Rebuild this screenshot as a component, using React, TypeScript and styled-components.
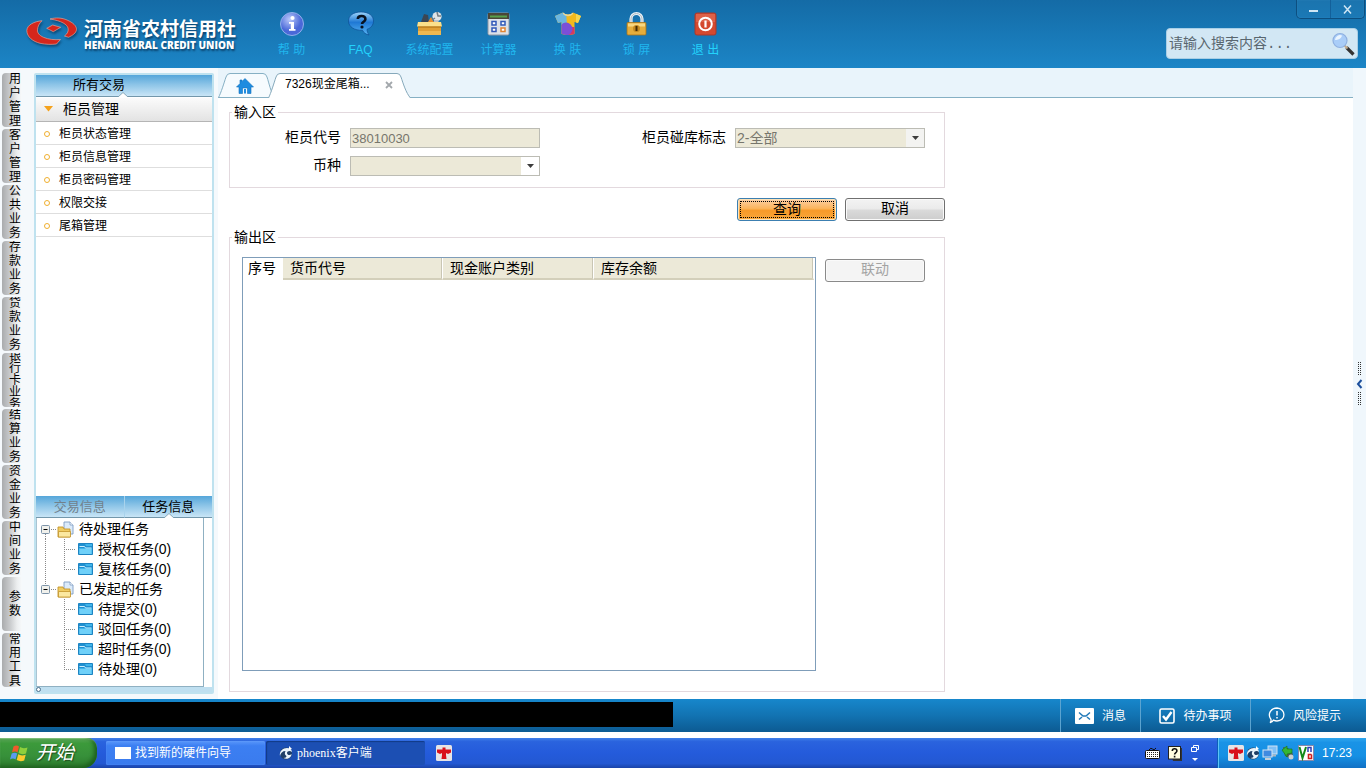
import React from "react";
import styled, { createGlobalStyle, css } from "styled-components";

const sans = `"Liberation Sans", "Noto Sans CJK SC", sans-serif`;
const serif = `"Liberation Serif", "Noto Sans CJK SC", serif`;
const mono = `"Liberation Mono", "Noto Sans CJK SC", monospace`;

const GlobalStyle = createGlobalStyle`
  *, *::before, *::after { box-sizing: border-box; }
  body { margin: 0; background: #fff; font: 14px/18px ${sans}; color: #000; }
  button, input, select { font: inherit; color: inherit; margin: 0; padding: 0; border-radius: 0; }
  button { border: 0; background: none; cursor: pointer; white-space: nowrap; }
  ul { list-style: none; margin: 0; padding: 0; }
  svg { display: block; flex: none; }
`;

const Screen = styled.div`
  display: flex;
  flex-direction: column;
  min-height: 100vh;
`;

/* ---------- header ---------- */

const Header = styled.header`
  display: flex;
  height: 68px;
  background: linear-gradient(#146ba6, #1c85c6);
`;

const Brand = styled.div`
  display: flex;
  width: 257px;
  padding: 16px 0 0 26px;
  gap: 7px;
  flex: none;
`;

const BrandText = styled.div`
  padding-top: 4px;
  color: #fff;
  white-space: nowrap;
  text-shadow: 1px 2px 2px rgba(0, 30, 60, 0.6);
`;

const BrandName = styled.div`
  font-size: 19px;
  line-height: 20px;
  font-weight: 700;
`;

const BrandLatin = styled.div`
  font: 800 10px/10px "Open Sans", ${sans};
`;

const ToolNav = styled.nav`
  display: flex;
  flex: 1;
`;

const Tool = styled.button<{ $bright?: boolean }>`
  display: flex;
  flex-direction: column;
  align-items: center;
  width: 69px;
  height: 68px;
  padding-top: 11px;
  gap: 4px;
  font-size: 12px;
  line-height: 18px;
  white-space: pre;
  color: ${(p) => (p.$bright ? "#23d3fc" : "#20b6ee")};
`;

const HeaderEnd = styled.div`
  display: flex;
  flex-direction: column;
  align-items: flex-end;
  gap: 9px;
`;

const WindowButtons = styled.div`
  display: flex;
  width: 69px;
  height: 19px;
  margin-right: 1px;
  border: 1px solid #0d4f80;
  border-top: 0;
  border-radius: 0 0 5px 5px;
  background: linear-gradient(#1b74ae, #1b79b6);
  box-shadow: inset 0 0 1px #4d9dcb;
`;

const WindowButton = styled.button`
  display: grid;
  place-items: center;
  flex: 1;
  & + & {
    border-left: 1px solid #13609a;
  }
`;

const Search = styled.form`
  display: flex;
  align-items: center;
  width: 192px;
  height: 31px;
  margin-right: 8px;
  padding: 0 2px;
  border: 1px solid #a9cfe6;
  border-radius: 4px;
  background: #d2e7f4;
`;

const SearchInput = styled.input`
  flex: 1;
  min-width: 0;
  border: 0;
  outline: 0;
  background: none;
  font: 14px/20px ${mono};
  &::placeholder {
    color: #59666f;
    opacity: 1;
  }
`;

/* ---------- left side ---------- */

const Main = styled.main`
  display: flex;
  flex: 1;
  background: #f5f9fc;
`;

const Rail = styled.nav`
  display: flex;
  flex-direction: column;
  gap: 2px;
  width: 34px;
  padding: 5px 0 0 2px;
  flex: none;
`;

const RailTab = styled.button<{ $tight?: boolean }>`
  display: flex;
  flex-direction: column;
  align-items: center;
  justify-content: center;
  width: 20px;
  height: 54px;
  padding-left: 6px;
  overflow: hidden;
  border-radius: 4px 0 0 4px;
  background: linear-gradient(90deg, #a9abad, #c9cbcd 40%, #eceeef 75%, #f7fafc);
  font-size: 12px;
  line-height: ${(p) => (p.$tight ? 12 : 14)}px;
`;

const RailGlyph = styled.span`
  flex: none;
`;

const Sidebar = styled.aside`
  display: flex;
  flex-direction: column;
  width: 180px;
  margin: 5px 0;
  flex: none;
  border: 2px solid #bfe2ef;
  border-radius: 2px;
  background: #fff;
`;

const blueBar = css`
  background: linear-gradient(#55a6da, #8cc4e7 45%, #c9e5f6);
`;

const SideTitle = styled.button`
  ${blueBar}
  position: relative;
  height: 22px;
  padding: 0 50px 2px 0;
  border-bottom: 1px solid #7397ab;
  font-size: 13px;
  line-height: 19px;
`;

const Notch = styled.svg`
  position: absolute;
  right: 84px;
  bottom: -1px;
`;

const GroupButton = styled.button`
  display: flex;
  align-items: center;
  gap: 10px;
  height: 24px;
  margin-top: 1px;
  padding: 0 0 2px 8px;
  border-bottom: 1px solid #b5b5b5;
  background: linear-gradient(#fbfbfb, #e3e3e3);
`;

const MenuItem = styled.button`
  display: flex;
  align-items: center;
  gap: 9px;
  width: 100%;
  height: 23px;
  padding: 2px 0 0 8px;
  border-bottom: 1px solid #dedede;
  font-size: 12px;
`;

const Bullet = styled.span`
  width: 6px;
  height: 6px;
  border: 1px solid #f0b030;
  border-radius: 50%;
`;

const InfoTabs = styled.div`
  display: flex;
  height: 22px;
  margin-top: auto;
`;

const InfoTab = styled.button<{ $active?: boolean }>`
  ${blueBar}
  position: relative;
  flex: 1;
  font-size: 13px;
  line-height: 22px;
  border-bottom: 1px solid #7397ab;
  color: ${(p) => (p.$active ? "#000" : "#71818c")};
  & + & {
    border-left: 1px solid #a9d3ec;
  }
  ${Notch} {
    right: 38px;
  }
`;

const Tree = styled.ul`
  width: 168px;
  height: 169px;
  padding: 1px 0 0 4px;
  border: 1px solid #8fb0c2;
  border-top: 0;
  border-left-color: #a9c4d2;
`;

const TreeRow = styled.li`
  display: flex;
  align-items: center;
  height: 20px;
  white-space: nowrap;
`;

const TreeLabel = styled.span<{ $gap: number }>`
  margin-left: ${(p) => p.$gap}px;
`;

const SideFoot = styled.div`
  display: flex;
  align-items: center;
  height: 5px;
  background: #bfdff0;
`;

const Grip = styled.span`
  width: 5px;
  height: 5px;
  border: 1px solid #4a6f8c;
  border-radius: 50%;
  background: #fff;
`;

/* ---------- workspace ---------- */

const Workspace = styled.section`
  display: flex;
  flex-direction: column;
  flex: 1;
  min-width: 0;
  margin-left: 4px;
`;

const TabStrip = styled.div`
  display: flex;
  height: 30px;
  padding-top: 5px;
  background: #e9f4fb;
  box-shadow: inset 0 -1px #86b0c4;
`;

const Tab = styled.div<{ $width: number }>`
  position: relative;
  display: flex;
  align-items: center;
  width: ${(p) => p.$width}px;
  height: 25px;
  & + & {
    margin-left: -7px;
  }
`;

const TabShape = styled.svg`
  position: absolute;
  left: 0;
  top: 0;
`;

const HomeButton = styled.button`
  position: relative;
  margin: 1px 0 0 18px;
`;

const TabTitle = styled.button`
  position: relative;
  margin: 0 0 4px 17px;
  font-size: 12px;
  line-height: 20px;
`;

const TabClose = styled.button`
  position: relative;
  margin: 0 18px 2px auto;
`;

const Page = styled.div`
  display: flex;
  flex-direction: column;
  flex: 1;
  padding: 5px 0 7px 11px;
  background: #fff;
  > * {
    width: 716px;
    max-width: 100%;
  }
`;

const Group = styled.fieldset`
  min-width: 0;
  margin: 0;
  padding: 0;
  border: 1px solid #e3d9de;
`;

const Legend = styled.legend`
  margin-left: 2px;
  padding: 0 2px;
  line-height: 18px;
`;

const Fields = styled.div`
  display: grid;
  grid-template-columns: 112px 190px 179px 190px;
  gap: 8px;
  padding: 7px 0 11px;
`;

const FieldLabel = styled.label`
  padding-right: 1px;
  line-height: 18px;
  text-align: right;
`;

const fieldBox = css`
  width: 100%;
  height: 20px;
  padding: 0 1px;
  border: 1px solid #bcbcb4;
  background: #ece9d8;
  font-size: 14px;
  line-height: 18px;
  color: #77766c;
  opacity: 1;
`;

const TextField = styled.input`
  ${fieldBox}
  font-size: 13px;
`;

const SelectWrap = styled.div`
  position: relative;
`;

const SelectField = styled.select`
  ${fieldBox}
  display: block;
  appearance: none;
`;

const SelectArrow = styled.span<{ $dim?: boolean }>`
  position: absolute;
  top: 1px;
  right: 1px;
  display: grid;
  place-items: center;
  width: 18px;
  height: 18px;
  background: ${(p) => (p.$dim ? "#f3f3f1" : "#fff")};
  pointer-events: none;
`;

const Actions = styled.div`
  display: flex;
  justify-content: flex-end;
  gap: 8px;
  margin: 10px 0 7px;
`;

const Button = styled.button<{ $primary?: boolean }>`
  width: 100px;
  height: 23px;
  padding: 0 2px 3px;
  flex: none;
  line-height: 18px;
  border: 1px solid #707070;
  border-radius: 3px;
  background: linear-gradient(#f3f3f3, #ebebeb 45%, #d9d9d9 55%, #cdcdcd);
  box-shadow: inset 0 0 0 1px #fafafa;
  ${(p) =>
    p.$primary &&
    css`
      padding: 2px;
      border-color: #3c7fb1;
      background: linear-gradient(#fbd0a8, #fbb45c 45%, #f79a28 55%, #f9a83c);
      box-shadow: inset 0 0 0 1px #fde3b8;
      > span {
        display: block;
        height: 17px;
        border: 1px dotted #000;
        line-height: 14px;
      }
    `}
  &:disabled {
    border-color: #8a8a8a;
    background: #f4f4f4;
    color: #a3a3a3;
  }
`;

const OutputGroup = styled(Group)`
  display: flex;
  flex: 1;
`;

const OutputBody = styled.div`
  display: flex;
  align-items: flex-start;
  gap: 9px;
  flex: 1;
  padding: 11px 19px 20px 12px;
`;

const TableFrame = styled.div`
  align-self: stretch;
  flex: 1;
  border: 1px solid #7f9db9;
  background: #fff;
`;

const Table = styled.table`
  width: 571px;
  max-width: 100%;
  table-layout: fixed;
  border-collapse: separate;
  border-spacing: 0;
`;

const Th = styled.th<{ $width: number }>`
  width: ${(p) => p.$width}px;
  height: 22px;
  padding: 0 0 0 7px;
  border-right: 1px solid #fff;
  border-bottom: 2px solid #d3cfba;
  background: #ece9d8;
  box-shadow: inset -1px 0 #c9c6b4;
  font-weight: 400;
  text-align: left;
  white-space: nowrap;
  &:first-child {
    padding-left: 5px;
    border-color: #fff;
    background: #fff;
    box-shadow: none;
  }
`;

const LinkButton = styled(Button)`
  margin-top: 2px;
`;

const Splitter = styled.button`
  display: flex;
  flex-direction: column;
  align-items: center;
  justify-content: center;
  width: 13px;
  flex: none;
  background: #f0f7fc;
`;

/* ---------- status bar ---------- */

const StatusBar = styled.footer`
  display: flex;
  align-items: center;
  height: 33px;
  margin-bottom: 6px;
  padding-right: 8px;
  background: linear-gradient(#1787cc, #1273b2 50%, #0c5a92);
`;

const MessageStrip = styled.div`
  width: 673px;
  height: 25px;
  margin: 0 auto 3px 0;
  background: #000;
`;

const StatusButton = styled.button<{ $width: number }>`
  display: flex;
  align-items: center;
  justify-content: center;
  gap: 8px;
  width: ${(p) => p.$width}px;
  height: 33px;
  border-left: 1px solid #5ba3d0;
  font-size: 12px;
  color: #fff;
`;

/* ---------- desktop taskbar ---------- */

const Taskbar = styled.div`
  display: flex;
  align-items: center;
  height: 30px;
  background: linear-gradient(#3f7fe8, #2a63de 12%, #245bdb 50%, #2358d2 85%, #1a44a8);
  color: #fff;
  font-size: 12px;
`;

const StartButton = styled.button`
  display: flex;
  align-items: center;
  gap: 7px;
  width: 97px;
  height: 30px;
  margin-right: 9px;
  padding-left: 10px;
  border-radius: 0 10px 14px 0;
  background: linear-gradient(#5aa558, #3c9a3b 18%, #37903a 60%, #2c7a2c);
  box-shadow: inset -3px -2px 4px #1d601d, inset 0 1px 1px #8fcf8c;
  font-size: 19px;
  font-style: italic;
  text-shadow: 1px 1px 1px #1d4a1d;
`;

const TaskButton = styled.button<{ $active?: boolean }>`
  display: flex;
  align-items: center;
  gap: 4px;
  width: 159px;
  height: 24px;
  margin-right: 1px;
  padding-left: ${(p) => (p.$active ? 13 : 9)}px;
  border-radius: 2px;
  background: ${(p) => (p.$active ? "#1c4fb3" : "linear-gradient(#5a97fa, #3c7ff2 20%, #3a7bee)")};
  box-shadow: ${(p) => (p.$active ? "inset 1px 1px 1px #123a86" : "inset 0 0 1px #7db0ff")};
  font: 12px/18px ${(p) => (p.$active ? serif : sans)};
`;

const PinnedIcon = styled.span`
  margin-left: 10px;
`;

const QuickIcons = styled.div`
  display: flex;
  align-items: center;
  gap: 8px;
  margin-left: auto;
  margin-right: 17px;
`;

const Tray = styled.div`
  display: flex;
  align-items: center;
  gap: 2px;
  width: 149px;
  height: 30px;
  padding-left: 10px;
  border-left: 1px solid #0d5fb8;
  background: linear-gradient(#2fa7ee, #1a93e6 15%, #1590e4 60%, #1170c4);
  box-shadow: inset 1px 0 #5cc3f7;
`;

const Clock = styled.time`
  margin-left: 6px;
`;

/* ---------- drawings ---------- */

const LogoMark = () => (
  <svg width="51" height="30" viewBox="0 0 51 30" style={{ filter: "drop-shadow(1px 2px 1px rgba(0,30,60,.5))" }}>
    <g fill="#d5261c" stroke="#f0b3a3" strokeWidth="0.6">
      <path d="M16 4.700C8 5.500 1 9 .8 14.500.8 21 7 25.500 14 27.300c6 1.300 12 1.300 16.500.7l4-4.500c-6 .5-12 0-17-2.200-4-1.800-6.300-4.300-6-7.500.2-3.500 1.800-6.500 4.500-9.100z" />
      <path d="M24 3c6-1.700 12-1.200 17 1 6 2.500 9.700 6 9.500 9.500-.2 3.500-4 6-8 7.800L38.500 20c3-2.300 4.300-5 3.500-8C41 8.500 36 5 24 3z" />
      <path d="M20.700 12.300l6-3.300 8 2.300-7.400 4.400z" />
    </g>
  </svg>
);

const InfoIcon = () => (
  <svg width="26" height="26" viewBox="0 0 26 26">
    <defs>
      <radialGradient id="infoG" cx=".4" cy=".3">
        <stop offset="0" stopColor="#b9c9fb" />
        <stop offset="1" stopColor="#4a68d8" />
      </radialGradient>
    </defs>
    <circle cx="13" cy="13" r="11.5" fill="url(#infoG)" stroke="#8fb0ea" />
    <circle cx="13.5" cy="7" r="2.1" fill="#fff" />
    <path d="M10 11h5v7h1.500v1.800H10V18h1.800v-5.200H10z" fill="#fff" />
  </svg>
);

const FaqIcon = () => (
  <svg width="26" height="26" viewBox="0 0 26 26">
    <defs>
      <linearGradient id="faqG" x2="0" y2="1">
        <stop offset="0" stopColor="#9ed6fb" />
        <stop offset=".45" stopColor="#1f78d4" />
        <stop offset="1" stopColor="#57b5f2" />
      </linearGradient>
    </defs>
    <path d="M13 1c7.500 0 12.500 3.500 12.500 9 0 4-2.500 7-6.500 8.300 0 2 .8 4 2 5.700-3-.6-5.500-2.200-6.500-4.700C6.500 19.500.5 16 .5 10 .5 4.500 5.500 1 13 1z" fill="url(#faqG)" stroke="#0d4e93" strokeWidth=".7" />
    <path d="M9.800 8c.2-4 7.800-4 7.600.2 0 2.500-3.400 2.500-3.400 4.800" fill="none" stroke="#08121f" strokeWidth="2.600" />
    <circle cx="14" cy="16" r="1.600" fill="#08121f" />
  </svg>
);

const ConfigIcon = () => (
  <svg width="28" height="26" viewBox="0 0 28 26">
    <path d="M5 11l3-8 4 1 1 7z" fill="#3b4653" />
    <path d="M12 11l3-5 3 5z" fill="#e88d2e" />
    <circle cx="21" cy="5.500" r="4.600" fill="#dfe4e7" />
    <path d="M21 1l1 4h3M16 9l3-2" fill="none" stroke="#737d84" strokeWidth="1.500" />
    <path d="M18 9l5 0-1 3h-4z" fill="#b8c0c6" />
    <path d="M2 11h23v13H2z" fill="#e0a035" />
    <path d="M2 11h23l1 4.500H1z" fill="#fbe08a" />
    <path d="M2 16h23" stroke="#a86c12" />
    <path d="M2 20h23v4H2z" fill="#eeb850" />
  </svg>
);

const CalcIcon = () => (
  <svg width="26" height="26" viewBox="0 0 26 26">
    <rect x="2" y="2" width="21" height="22" rx="1.500" fill="#dce1e8" stroke="#8d97a5" />
    <path d="M2 2h21v6H2z" fill="#4a4638" />
    <path d="M4 4.500h17v2H4z" fill="#58a14b" />
    <g fill="#fff" stroke="#3159b8" strokeWidth="1.500">
      <rect x="6" y="10.500" width="4" height="3.500" />
      <rect x="15" y="10.500" width="4" height="3.500" />
      <rect x="6" y="17" width="4" height="3.500" />
      <rect x="15" y="17" width="4" height="3.500" stroke="#e08432" />
    </g>
  </svg>
);

const ShirtIcon = () => (
  <svg width="28" height="26" viewBox="0 0 28 26">
    <defs>
      <clipPath id="shirtC">
        <path d="M9 1.500c2.500 2.500 7.500 2.500 10 0l8 3.500-3 7-3.500-1V23q-6.500 2-13 0V11L4 12 1 5z" />
      </clipPath>
    </defs>
    <g clipPath="url(#shirtC)">
      <path d="M0 0h28v26H0z" fill="#f2b91d" />
      <path d="M0 0h12l1 14H0z" fill="#6bb6e0" />
      <path d="M22 2l8-2v13l-8-1z" fill="#f5d64f" />
      <path d="M13 16h10v10H11z" fill="#d63861" />
      <circle cx="12" cy="18" r="6.500" fill="#7b4fd8" />
      <path d="M9 1c3 3 7 3 10 0v2c-3 3-7 3-10 0z" fill="#e9d79a" />
    </g>
  </svg>
);

const LockIcon = () => (
  <svg width="26" height="26" viewBox="0 0 26 26">
    <path d="M7 13V8a5.500 5.500 0 0 1 11 0v5" fill="none" stroke="#eaf1f6" strokeWidth="3.200" />
    <path d="M7 13V8a5.500 5.500 0 0 1 11 0v5" fill="none" stroke="#aebac3" strokeWidth="1" />
    <rect x="3" y="11.500" width="19" height="12.500" rx="1" fill="#e5ad3c" stroke="#a87418" strokeWidth=".8" />
    <path d="M4 12.500h17v3H4z" fill="#f7d782" />
    <circle cx="12.500" cy="17.500" r="3.500" fill="#c48a20" />
    <path d="M11.500 15h2v5h-2z" fill="#442c04" />
  </svg>
);

const ExitIcon = () => (
  <svg width="26" height="26" viewBox="0 0 26 26">
    <rect x="2" y="2" width="21" height="22" rx="2" fill="#d4492f" stroke="#a9382a" />
    <path d="M3 3h19v8H3z" fill="#e2725a" opacity=".6" />
    <circle cx="12.500" cy="13" r="6.300" fill="none" stroke="#fff" strokeWidth="2" />
    <path d="M12.500 9.500v7" stroke="#fff" strokeWidth="2.200" />
  </svg>
);

const MagnifierIcon = () => (
  <svg width="24" height="24" viewBox="0 0 24 24">
    <path d="M15.500 15.500l7 7" stroke="#333" strokeWidth="3.200" />
    <path d="M13 13l3.500 3.500" stroke="#c2a98b" strokeWidth="2" />
    <circle cx="9" cy="8.500" r="7" fill="#a9cdf8" stroke="#8fb0e0" strokeWidth="1.200" />
    <path d="M4 8a5 5 0 0 1 7-4.500C10 7 7 8 4 8z" fill="#eaf5ff" />
  </svg>
);

const HomeIcon = () => (
  <svg width="18" height="16" viewBox="0 0 18 16">
    <path d="M9 .5L17.500 9H15v6.500h-3.500V10h-5v5.500H3V9H.500L4 5.500V2h2v1.500z" fill="#1e8ce0" stroke="#1070bd" strokeWidth=".6" />
    <path d="M8 11h2v4.500H8z" fill="#1e8ce0" />
  </svg>
);

const NotchMark = () => (
  <Notch width="10" height="5" viewBox="0 0 10 5">
    <path d="M0 5l5-4.500L10 5" fill="#fff" stroke="#7397ab" strokeWidth=".8" />
  </Notch>
);

const DownArrow = () => (
  <svg width="7" height="4" viewBox="0 0 7 4">
    <path d="M0 0h7L3.500 4z" fill="#3c3c3c" />
  </svg>
);

const dots = { stroke: "#8a8a8a", strokeDasharray: "1 1" };

const BranchGuide = ({ first }: { first?: boolean }) => (
  <svg width="16" height="20" viewBox="0 0 16 20">
    <path d={first ? "M4.500 15v5M10 10.500h6" : "M4.500 0v6M10 10.500h6"} {...dots} />
    <rect x=".5" y="6.500" width="8" height="8" rx="1" fill="#f1f1ec" stroke="#7c93a8" />
    <path d="M2.500 10.500h4" stroke="#000" />
  </svg>
);

const LeafGuide = ({ last, open }: { last?: boolean; open?: boolean }) => (
  <svg width="34" height="20" viewBox="0 0 34 20">
    {open && <path d="M4.500 0v20" {...dots} />}
    <path d={last ? "M23.500 0v10.500" : "M23.500 0v20"} {...dots} />
    <path d="M23 10.500h11" {...dots} />
  </svg>
);

const OpenFolder = () => (
  <svg width="17" height="17" viewBox="0 0 17 17">
    <path d="M7 1h6l3 3v9H7z" fill="#dcebfa" stroke="#7e9cc4" strokeWidth=".9" />
    <path d="M13 1v3h3" fill="#fff" stroke="#7e9cc4" strokeWidth=".8" />
    <path d="M1 6h5l1 2h6v8H1z" fill="#f0cc62" stroke="#c3942b" strokeWidth=".9" />
    <path d="M1.500 10.500h12V16h-12z" fill="#fbe8a0" stroke="#c3942b" strokeWidth=".8" />
  </svg>
);

const ClosedFolder = () => (
  <svg width="15" height="14" viewBox="0 0 15 14">
    <path d="M.5 1.500h14v11H.500z" fill="#3fb4ea" stroke="#1d84c2" />
    <path d="M1 2h6l1 2h6v2H1z" fill="#1f8fd0" />
    <path d="M1.500 4.500h5l1 1.500h6" fill="none" stroke="#c8efff" />
    <path d="M1.500 7h12v5h-12z" fill="#6fd0f8" />
  </svg>
);

const GripDots = () => (
  <svg width="5" height="14" viewBox="0 0 5 14">
    <path d="M1.500 0v14M3.500 0v14" stroke="#333" strokeWidth="1" strokeDasharray="1 1" />
  </svg>
);

const MailIcon = () => (
  <svg width="19" height="16" viewBox="0 0 19 16">
    <rect width="19" height="16" rx="1" fill="#fff" />
    <path d="M4 4.500l4 3.500h3l4-3.500M4 11.500l3-2.500M15 11.500l-3-2.500" fill="none" stroke="#1f78b8" strokeWidth="1.500" />
  </svg>
);

const TodoIcon = () => (
  <svg width="16" height="16" viewBox="0 0 16 16">
    <rect x="1" y="1" width="14" height="14" rx="1.500" fill="none" stroke="#fff" strokeWidth="1.600" />
    <path d="M4 8l3 3.500L12.500 4" fill="none" stroke="#fff" strokeWidth="2.400" />
  </svg>
);

const RiskIcon = () => (
  <svg width="17" height="17" viewBox="0 0 17 17">
    <path d="M2 15.500c1-.8 1.300-1.800 1-3C-1 7 3 1 9 1c9 .5 9.500 13 0 13-1.500 0-2.500-.3-3.500-.8C4.500 14.800 3 15.300 2 15.500z" fill="none" stroke="#fff" strokeWidth="1.300" />
    <path d="M9 4v4.500M9 10v1.500" stroke="#fff" strokeWidth="1.500" />
  </svg>
);

const FlagIcon = () => (
  <svg width="19" height="18" viewBox="0 0 19 18">
    <path d="M3.500 2.500q3-2 5.500 0L7.500 8.500q-2.500-2-5.500 0z" fill="#ef5a2c" />
    <path d="M10 3q3 2 7.500.5L16 9.500Q12 11 8.500 9z" fill="#8ed03c" />
    <path d="M1.700 9.500q3-1.500 5.500 0L5.500 15.500q-2.500-2-5.500 0z" fill="#5a9bf2" />
    <path d="M8.200 10.300q3 2 7.500.5l-1.500 5.700q-4 1.500-7.500-.5z" fill="#fbcb2e" />
  </svg>
);

const CrossIcon = () => (
  <svg width="16" height="16" viewBox="0 0 16 16">
    <rect width="16" height="16" rx="1.500" fill="#e6e4e6" />
    <path d="M6.500 2.500h3v2H15v3l-3 1.500-2-1v2l.5 4h-5l.500-4V8l-2 1L1 7.500v-3h5.500z" fill="#d8101c" />
  </svg>
);

const SwirlIcon = () => (
  <svg width="14" height="14" viewBox="0 0 14 14">
    <circle cx="7" cy="7.500" r="6" fill="#1f3f66" />
    <path d="M1 10C0 5 4 2 8 2c3 0 5 2 5 4-2-2-5-1-5 1s3 3 4.500 1c0 4-5 6-8 4 2 0 3-1 3-2-2-1-2-3-1-5-3 0-5 2-5.500 5z" fill="#eaf4fb" />
    <path d="M10 0l3 3-3 1z" fill="#fff" />
  </svg>
);

const KeyboardIcon = () => (
  <svg width="15" height="12" viewBox="0 0 15 12">
    <path d="M4 3q2-3 3.500-1T11 1" fill="none" stroke="#111" />
    <rect x=".5" y="3.500" width="14" height="8" rx="1" fill="#fff" stroke="#111" />
    <path d="M2 5.500h11M2 7.500h11M2 9.500h11" stroke="#222" strokeDasharray="1 1" />
  </svg>
);

const HelpNote = () => (
  <svg width="14" height="15" viewBox="0 0 14 15">
    <path d="M2 2h12v13H5z" fill="#333" />
    <rect x=".5" y=".5" width="12" height="12.500" fill="#fffde0" stroke="#222" />
    <path d="M4.300 5c0-3 4.600-3 4.600 0 0 1.500-2.300 1.600-2.300 3.500M6.600 9.800v1.700" fill="none" stroke="#111" strokeWidth="1.600" />
  </svg>
);

const RestoreIcon = () => (
  <svg width="10" height="18" viewBox="0 0 10 18">
    <path d="M3.500 3V1.500h5v4H7M1.500 3.500h5v4h-5z" fill="none" stroke="#fff" />
    <path d="M2 14h6l-3 3z" fill="#fff" />
  </svg>
);

const NetworkIcon = () => (
  <svg width="16" height="16" viewBox="0 0 16 16">
    <rect x="6" y="1" width="9" height="8" fill="#7fc0f6" stroke="#cfe2f3" />
    <path d="M9 9.500h5v2H9z" fill="#aab6c2" />
    <rect x="1" y="5" width="9" height="7" fill="#3f8ae0" stroke="#d5e4f2" />
    <path d="M3 13h6v2H3z" fill="#c4ced8" />
  </svg>
);

const DeviceIcon = () => (
  <svg width="16" height="16" viewBox="0 0 16 16">
    <path d="M3 2l5 1 5 6-2 5-6-3z" fill="#4d5b55" />
    <path d="M2 5l5-4v3h5v4l-5 1v3z" fill="#35b535" stroke="#177a1d" strokeWidth=".7" />
    <circle cx="11" cy="12" r="2.500" fill="#c9cfd0" />
  </svg>
);

const VncIcon = () => (
  <svg width="16" height="16" viewBox="0 0 16 16">
    <rect x=".5" y=".5" width="15" height="15" fill="#fff" stroke="#88a" />
    <path d="M1.500 2l3 11 3.500-11" fill="none" stroke="#148a1a" strokeWidth="2" />
    <path d="M10 7V2.500h3V7" fill="none" stroke="#2b3fb8" strokeWidth="1.500" />
    <path d="M13.500 9.500H10.500v4h3v-4" fill="none" stroke="#d02020" strokeWidth="1.600" />
  </svg>
);

/* ---------- data ---------- */

const tools: { label: string; Icon: React.FC; bright?: boolean }[] = [
  { label: "帮 助", Icon: InfoIcon },
  { label: "FAQ", Icon: FaqIcon, bright: true },
  { label: "系统配置", Icon: ConfigIcon },
  { label: "计算器", Icon: CalcIcon },
  { label: "换 肤", Icon: ShirtIcon },
  { label: "锁 屏", Icon: LockIcon },
  { label: "退 出", Icon: ExitIcon, bright: true },
];

const rail = ["用户管理", "客户管理", "公共业务", "存款业务", "贷款业务", "银行卡业务", "结算业务", "资金业务", "中间业务", "参数", "常用工具"];

const menu = ["柜员状态管理", "柜员信息管理", "柜员密码管理", "权限交接", "尾箱管理"];

const taskGroups = [
  { name: "待处理任务", items: ["授权任务(0)", "复核任务(0)"] },
  { name: "已发起的任务", items: ["待提交(0)", "驳回任务(0)", "超时任务(0)", "待处理(0)"] },
];

const columns = [
  { name: "序号", width: 40 },
  { name: "货币代号", width: 160 },
  { name: "现金账户类别", width: 151 },
  { name: "库存余额", width: 220 },
];

export default function App() {
  return (
    <Screen>
      <GlobalStyle />
      <Header>
        <Brand>
          <LogoMark />
          <BrandText>
            <BrandName>河南省农村信用社</BrandName>
            <BrandLatin>HENAN RURAL CREDIT UNION</BrandLatin>
          </BrandText>
        </Brand>
        <ToolNav>
          {tools.map(({ label, Icon, bright }) => (
            <Tool key={label} $bright={bright}>
              <Icon />
              {label}
            </Tool>
          ))}
        </ToolNav>
        <HeaderEnd>
          <WindowButtons>
            <WindowButton aria-label="最小化">
              <svg width="10" height="8" viewBox="0 0 10 8">
                <path d="M0 6h9" stroke="#cfe6f5" strokeWidth="2" />
              </svg>
            </WindowButton>
            <WindowButton aria-label="关闭">
              <svg width="9" height="9" viewBox="0 0 9 9">
                <path d="M1 0.500l7 8M8 .5l-7 8" stroke="#cfe6f5" strokeWidth="1.500" />
              </svg>
            </WindowButton>
          </WindowButtons>
          <Search onSubmit={(e) => e.preventDefault()}>
            <SearchInput aria-label="搜索" placeholder="请输入搜索内容..." />
            <button aria-label="搜索">
              <MagnifierIcon />
            </button>
          </Search>
        </HeaderEnd>
      </Header>

      <Main>
        <Rail>
          {rail.map((name) => (
            <RailTab key={name} $tight={name.length > 4}>
              {[...name].map((ch, i) => (
                <RailGlyph key={i}>{ch}</RailGlyph>
              ))}
            </RailTab>
          ))}
        </Rail>

        <Sidebar>
          <SideTitle>
            所有交易
            <NotchMark />
          </SideTitle>
          <GroupButton>
            <svg width="9" height="6" viewBox="0 0 9 6">
              <path d="M0 0h9L4.500 5.500z" fill="#f5a21c" />
            </svg>
            柜员管理
          </GroupButton>
          <ul>
            {menu.map((name) => (
              <li key={name}>
                <MenuItem>
                  <Bullet />
                  {name}
                </MenuItem>
              </li>
            ))}
          </ul>
          <InfoTabs>
            <InfoTab>交易信息</InfoTab>
            <InfoTab $active>
              任务信息
              <NotchMark />
            </InfoTab>
          </InfoTabs>
          <Tree>
            {taskGroups.map((group, g) => (
              <React.Fragment key={group.name}>
                <TreeRow>
                  <BranchGuide first={g === 0} />
                  <OpenFolder />
                  <TreeLabel $gap={5}>{group.name}</TreeLabel>
                </TreeRow>
                {group.items.map((item, i) => (
                  <TreeRow key={item}>
                    <LeafGuide open={g === 0} last={i === group.items.length - 1} />
                    <TreeLabel $gap={3}>
                      <ClosedFolder />
                    </TreeLabel>
                    <TreeLabel $gap={5}>{item}</TreeLabel>
                  </TreeRow>
                ))}
              </React.Fragment>
            ))}
          </Tree>
          <SideFoot>
            <Grip />
          </SideFoot>
        </Sidebar>

        <Workspace>
          <TabStrip>
            <Tab $width={57}>
              <TabShape width="57" height="25" viewBox="0 0 57 25">
                <path d="M.5 24.500C3 20 6 10 8 4q1-3.500 4-3.500h33q3 0 4 3.500c2 6 4 16 7.500 20.500z" fill="#f6fbfe" stroke="#86b0c4" />
              </TabShape>
              <HomeButton aria-label="首页">
                <HomeIcon />
              </HomeButton>
            </Tab>
            <Tab $width={143}>
              <TabShape width="143" height="25" viewBox="0 0 143 25">
                <path d="M.5 25C3 20 6 10 8 4Q9 .5 12 .5h117q3 0 4 3.500c2 6 5 16 9.500 21z" fill="#fff" />
                <path d="M.5 25C3 20 6 10 8 4Q9 .5 12 .5h117q3 0 4 3.500c2 6 5 16 9.500 21" fill="none" stroke="#86a9bb" />
              </TabShape>
              <TabTitle>7326现金尾箱...</TabTitle>
              <TabClose aria-label="关闭标签">
                <svg width="8" height="8" viewBox="0 0 8 8">
                  <path d="M1 1l6 6M7 1L1 7" stroke="#a3a8ac" strokeWidth="1.800" />
                </svg>
              </TabClose>
            </Tab>
          </TabStrip>

          <Page>
            <Group>
              <Legend>输入区</Legend>
              <Fields>
                <FieldLabel htmlFor="teller">柜员代号</FieldLabel>
                <TextField id="teller" defaultValue="38010030" disabled />
                <FieldLabel htmlFor="flag">柜员碰库标志</FieldLabel>
                <SelectWrap>
                  <SelectField id="flag" disabled>
                    <option>2-全部</option>
                  </SelectField>
                  <SelectArrow $dim>
                    <DownArrow />
                  </SelectArrow>
                </SelectWrap>
                <FieldLabel htmlFor="currency">币种</FieldLabel>
                <SelectWrap>
                  <SelectField id="currency">
                    <option></option>
                  </SelectField>
                  <SelectArrow>
                    <DownArrow />
                  </SelectArrow>
                </SelectWrap>
              </Fields>
            </Group>
            <Actions>
              <Button $primary>
                <span>查询</span>
              </Button>
              <Button>取消</Button>
            </Actions>
            <OutputGroup>
              <Legend>输出区</Legend>
              <OutputBody>
                <TableFrame>
                  <Table>
                    <thead>
                      <tr>
                        {columns.map((c) => (
                          <Th key={c.name} $width={c.width}>
                            {c.name}
                          </Th>
                        ))}
                      </tr>
                    </thead>
                  </Table>
                </TableFrame>
                <LinkButton disabled>联动</LinkButton>
              </OutputBody>
            </OutputGroup>
          </Page>
        </Workspace>

        <Splitter aria-label="展开侧栏">
          <GripDots />
          <svg width="7" height="16" viewBox="0 0 7 16">
            <path d="M5.500 4L2 8l3.500 4" fill="none" stroke="#1c4f9c" strokeWidth="2" />
          </svg>
          <GripDots />
        </Splitter>
      </Main>

      <StatusBar>
        <MessageStrip />
        <StatusButton $width={80}>
          <MailIcon />
          消息
        </StatusButton>
        <StatusButton $width={110}>
          <TodoIcon />
          待办事项
        </StatusButton>
        <StatusButton $width={108}>
          <RiskIcon />
          风险提示
        </StatusButton>
      </StatusBar>

      <Taskbar>
        <StartButton>
          <FlagIcon />
          开始
        </StartButton>
        <TaskButton>
          <svg width="16" height="12" viewBox="0 0 16 12">
            <path d="M0 0h16v12H0z" fill="#fff" />
          </svg>
          找到新的硬件向导
        </TaskButton>
        <TaskButton $active>
          <SwirlIcon />
          phoenix客户端
        </TaskButton>
        <PinnedIcon>
          <CrossIcon />
        </PinnedIcon>
        <QuickIcons>
          <KeyboardIcon />
          <HelpNote />
          <RestoreIcon />
        </QuickIcons>
        <Tray>
          <CrossIcon />
          <SwirlIcon />
          <NetworkIcon />
          <DeviceIcon />
          <VncIcon />
          <Clock>17:23</Clock>
        </Tray>
      </Taskbar>
    </Screen>
  );
}
